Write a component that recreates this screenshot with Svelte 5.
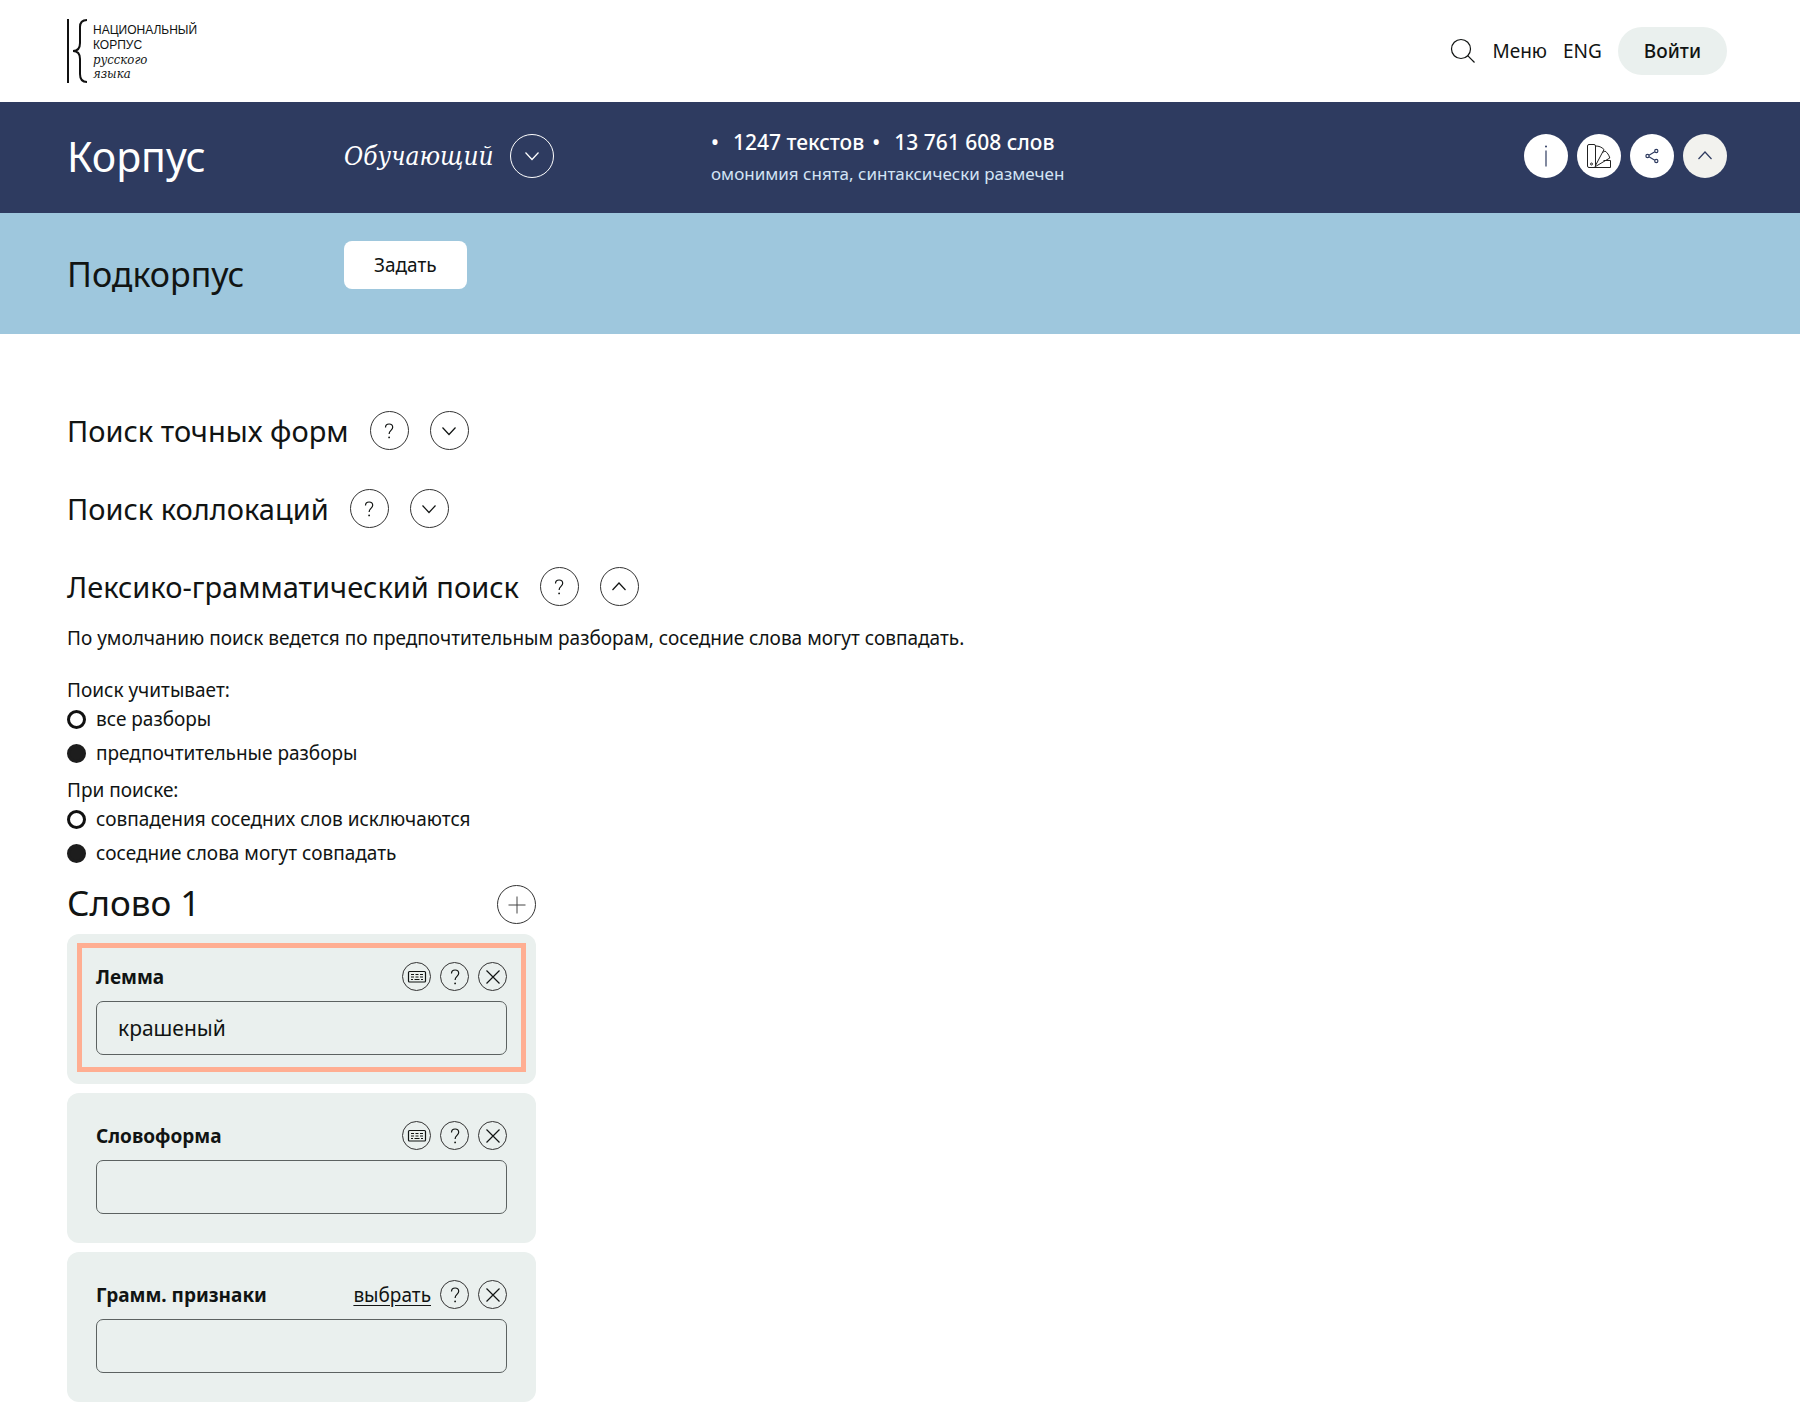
<script>
    let readings = $state('preferred');
    let neighbours = $state('same');
    let openSections = $state({ exact: false, collocations: false, lexgram: true });

    let fields = $state([
        { id: 'lemma', label: 'Лемма', value: 'крашеный', keyboard: true, active: true },
        { id: 'wordform', label: 'Словоформа', value: '', keyboard: true, active: false },
        { id: 'gramm', label: 'Грамм. признаки', value: '', keyboard: false, active: false }
    ]);

    const readingOptions = [
        { value: 'all', label: 'все разборы' },
        { value: 'preferred', label: 'предпочтительные разборы' }
    ];

    const neighbourOptions = [
        { value: 'exclude', label: 'совпадения соседних слов исключаются' },
        { value: 'same', label: 'соседние слова могут совпадать' }
    ];

    const clearField = (field) => {
        field.value = '';
    };
</script>

{#snippet question()}
    <svg class="icon" viewBox="0 0 28 28" width="28" height="28" aria-hidden="true">
        <path d="M10.5 10.5c0-2.2 1.4-3.5 3.6-3.5s3.6 1.3 3.6 3.2c0 3.2-3.6 3.3-3.6 6.8" />
        <circle class="dot" cx="14.1" cy="20.4" r="0.9" />
    </svg>
{/snippet}

{#snippet chevron(up)}
    <svg class="icon" viewBox="0 0 28 28" width="28" height="28" aria-hidden="true">
        {#if up}
            <path d="m7.5 17 6.5-7 6.5 7" />
        {:else}
            <path d="m7.5 10.5 6.5 7 6.5-7" />
        {/if}
    </svg>
{/snippet}

{#snippet section(key, title)}
    <div class="section-row">
        <h2>{title}</h2>
        <button class="circle" aria-label="Справка">{@render question()}</button>
        <button
            class="circle"
            aria-label="Развернуть"
            aria-expanded={openSections[key]}
            onclick={() => (openSections[key] = !openSections[key])}
        >
            {@render chevron(openSections[key])}
        </button>
    </div>
{/snippet}

<header class="top">
    <a class="logo" href="#home">
        <svg viewBox="0 0 22 64" width="22" height="64" aria-hidden="true">
            <path d="M1 0v64" stroke-width="2" />
            <path d="M20 1c-5 0-7 2-7 7v16c0 5-2 8-7 8 5 0 7 3 7 8v15c0 5 2 8 7 8" stroke-width="2" />
        </svg>
        <span class="logo-text">
            <span>НАЦИОНАЛЬНЫЙ</span>
            <span>КОРПУС</span>
            <em>русского</em>
            <em>языка</em>
        </span>
    </a>
    <nav>
        <button aria-label="Поиск">
            <svg class="icon" viewBox="0 0 26 26" width="26" height="26" aria-hidden="true">
                <circle cx="11" cy="11" r="9.5" />
                <path d="m17.7 17.7 6.8 6.8" />
            </svg>
        </button>
        <a href="#menu">Меню</a>
        <a href="#eng">ENG</a>
        <button class="login">Войти</button>
    </nav>
</header>

<section class="band corpus">
    <h1>Корпус</h1>
    <div class="corpus-name">
        <em>Обучающий</em>
        <button class="round outline" aria-label="Выбрать корпус">{@render chevron(false)}</button>
    </div>
    <div class="stats">
        <div class="counts"><span>1247 текстов</span><span>13 761 608 слов</span></div>
        <div class="note">омонимия снята, синтаксически размечен</div>
    </div>
    <div class="tools">
        <button class="round" aria-label="Информация">
            <svg class="icon" viewBox="0 0 28 28" width="28" height="28" aria-hidden="true">
                <path d="M14 8.5v16" />
                <circle class="dot" cx="14" cy="4.6" r="1" />
            </svg>
        </button>
        <button class="round" aria-label="Портрет корпуса">
            <svg class="icon swatch" viewBox="0 0 28 28" width="28" height="28" aria-hidden="true">
                <rect x="2.5" y="2.5" width="8" height="23" rx="1.5" />
                <circle cx="6.5" cy="22" r="1" />
                <path d="M10.500 4c3.500 0 6 1 8.500 3.500L10.500 23.500" />
                <path d="M17.500 10.500l2.500-1.500c2.200 1.500 4 4 4.800 7L10.500 24.500" />
                <path d="m18.500 18.500h7v7H6.500" />
            </svg>
        </button>
        <button class="round" aria-label="Поделиться">
            <svg class="icon" viewBox="0 0 28 28" width="28" height="28" aria-hidden="true">
                <circle cx="9.5" cy="14" r="1.6" />
                <circle cx="18.3" cy="9" r="1.6" />
                <circle cx="18.3" cy="19" r="1.6" />
                <path d="m11 13.2 5.8-3.400M11 14.8l5.8 3.4" />
            </svg>
        </button>
        <button class="round muted" aria-label="Свернуть">{@render chevron(true)}</button>
    </div>
</section>

<section class="band subcorpus">
    <h2>Подкорпус</h2>
    <button class="set">Задать</button>
</section>

<main>
    {@render section('exact', 'Поиск точных форм')}
    {@render section('collocations', 'Поиск коллокаций')}
    {@render section('lexgram', 'Лексико-грамматический поиск')}

    {#if openSections.lexgram}
        <p class="hint">По умолчанию поиск ведется по предпочтительным разборам, соседние слова могут совпадать.</p>

        <fieldset>
            <legend>Поиск учитывает:</legend>
            {#each readingOptions as option}
                <label>
                    <input type="radio" name="readings" value={option.value} bind:group={readings} />
                    {option.label}
                </label>
            {/each}
        </fieldset>
        <fieldset>
            <legend>При поиске:</legend>
            {#each neighbourOptions as option}
                <label>
                    <input type="radio" name="neighbours" value={option.value} bind:group={neighbours} />
                    {option.label}
                </label>
            {/each}
        </fieldset>

        <div class="word">
            <div class="word-header">
                <h3>Слово 1</h3>
                <button class="circle" aria-label="Добавить условие">
                    <svg class="icon plus" viewBox="0 0 28 28" width="28" height="28" aria-hidden="true">
                        <path d="M14 5.5v17M5.5 14h17" />
                    </svg>
                </button>
            </div>
            {#each fields as field (field.id)}
                <div class="card" class:active={field.active}>
                    <div class="card-header">
                        <label for={field.id}>{field.label}</label>
                        {#if field.keyboard}
                            <button class="circle small" aria-label="Клавиатура">
                                <svg class="icon" viewBox="0 0 28 28" width="28" height="28" aria-hidden="true">
                                    <rect x="5.5" y="8.5" width="17" height="10.5" rx="1" />
                                    <path d="M8 11.5h3M12.5 11.5h3M17 11.5h3M8 14h3M12.5 14h3M17 14h3M8 16.5h2M11.5 16.5h5M18 16.5h2" />
                                </svg>
                            </button>
                        {:else}
                            <a href="#select">выбрать</a>
                        {/if}
                        <button class="circle small" aria-label="Справка">{@render question()}</button>
                        <button class="circle small" aria-label="Очистить" onclick={() => clearField(field)}>
                            <svg class="icon" viewBox="0 0 28 28" width="28" height="28" aria-hidden="true">
                                <path d="m7.5 7.500 13 13M20.5 7.500l-13 13" />
                            </svg>
                        </button>
                    </div>
                    <input id={field.id} type="text" bind:value={field.value} />
                </div>
            {/each}
        </div>
    {/if}
</main>

<style>
    :global(body) {
        margin: 0;
        background: #fff;
        color: #111413;
        font-family: "Noto Sans", sans-serif;
        font-size: 19px;
        line-height: 26px;
    }

    h1, h2, h3, p, fieldset, legend {
        margin: 0;
        padding: 0;
        border: none;
        font-weight: 400;
    }

    button {
        display: flex;
        align-items: center;
        justify-content: center;
        box-sizing: border-box;
        padding: 0;
        border: none;
        background: none;
        color: inherit;
        font: inherit;
        cursor: pointer;
    }

    a {
        color: inherit;
        text-decoration: none;
    }

    .icon {
        display: block;
        flex: none;
        fill: none;
        stroke: currentColor;
        stroke-width: 1.2;
    }

    .icon .dot {
        fill: currentColor;
        stroke: none;
    }

    .icon.plus {
        stroke-width: 1;
        color: #444;
    }

    .icon.swatch {
        stroke-width: 1;
        color: #222;
    }

    .top {
        display: flex;
        align-items: center;
        justify-content: space-between;
        box-sizing: border-box;
        height: 102px;
        padding: 0 73px 0 67px;
    }

    .logo {
        display: flex;
        gap: 4px;
    }

    .logo svg {
        fill: none;
        stroke: #111;
    }

    .logo-text {
        display: flex;
        flex-direction: column;
        padding-top: 4px;
        font-family: "Liberation Sans", Arial, sans-serif;
        font-size: 12px;
        line-height: 15px;
    }

    .logo-text em {
        font-family: "DejaVu Serif Condensed", "DejaVu Serif", serif;
        font-size: 13px;
        line-height: 14px;
    }

    nav {
        display: flex;
        align-items: center;
        gap: 16px;
    }

    .login {
        height: 48px;
        padding: 0 26px;
        border-radius: 24px;
        background: #eaf0ee;
        font-weight: 500;
    }

    .band {
        display: grid;
        grid-template-columns: 277px 367px 1fr auto;
        padding: 0 73px 0 67px;
    }

    .corpus {
        box-sizing: border-box;
        align-items: center;
        height: 111px;
        padding-bottom: 3px;
        background: #2e3b60;
        color: #fff;
    }

    .corpus h1 {
        font-size: 41px;
        line-height: 56px;
    }

    .corpus-name {
        display: flex;
        align-items: center;
        gap: 16px;
    }

    .corpus-name em {
        font-family: "DejaVu Serif Condensed", "DejaVu Serif", serif;
        font-size: 26px;
        line-height: 36px;
    }

    .round {
        width: 44px;
        height: 44px;
        border-radius: 50%;
        background: #fff;
        color: #2e3b60;
    }

    .round.outline {
        border: 1px solid #fff;
        background: none;
        color: #fff;
    }

    .round.muted {
        background: #f2f2ee;
    }

    .stats {
        padding-top: 4px;
    }

    .counts {
        display: flex;
        gap: 8px;
        font-size: 21px;
        line-height: 32px;
        font-weight: 500;
    }

    .counts span::before {
        content: "•";
        margin-right: 14px;
    }

    .note {
        color: #d3e4f5;
        font-size: 17px;
        line-height: 32px;
    }

    .tools {
        display: flex;
        gap: 9px;
    }

    .subcorpus {
        align-items: start;
        padding-top: 28px;
        padding-bottom: 35px;
        background: #9ec7dd;
    }

    .subcorpus h2 {
        padding-top: 8px;
        font-size: 34px;
        line-height: 50px;
    }

    .set {
        justify-self: start;
        height: 48px;
        padding: 0 30px;
        border-radius: 8px;
        background: #fff;
    }

    main {
        padding: 77px 73px 6px 67px;
    }

    .section-row {
        display: flex;
        align-items: center;
        gap: 21px;
        margin-bottom: 39px;
    }

    .section-row h2 {
        font-size: 29px;
        line-height: 39px;
    }

    .circle {
        flex: none;
        width: 39px;
        height: 39px;
        border: 1px solid #333;
        border-radius: 50%;
    }

    .circle.small {
        width: 29px;
        height: 29px;
    }

    .hint {
        margin: -20px 0 26px;
    }

    fieldset {
        margin-bottom: 5px;
    }

    legend {
        line-height: 27px;
    }

    fieldset label {
        display: flex;
        align-items: center;
        gap: 10px;
        margin-bottom: 4px;
        line-height: 30px;
    }

    input[type="radio"] {
        appearance: none;
        box-sizing: border-box;
        width: 19px;
        height: 19px;
        margin: 0;
        border: 3px solid #111;
        border-radius: 50%;
    }

    input[type="radio"]:checked {
        border-color: #1d1d1d;
        background: #1d1d1d;
    }

    .word {
        max-width: 469px;
        padding-top: 8px;
    }

    .word-header {
        display: flex;
        align-items: flex-start;
        justify-content: space-between;
        margin-bottom: 10px;
    }

    h3 {
        font-size: 35px;
        line-height: 35px;
    }

    .card {
        position: relative;
        margin-bottom: 9px;
        padding: 28px 29px 29px;
        border-radius: 12px;
        background: #eaf0ee;
    }

    .card:last-child {
        margin-bottom: 0;
    }

    .card.active::after {
        content: "";
        position: absolute;
        inset: 9px 10px 12px;
        border: 5px solid #ffae92;
        pointer-events: none;
    }

    .card-header {
        display: flex;
        align-items: center;
        gap: 9px;
        margin-bottom: 10px;
    }

    .card-header label {
        flex: 1;
        font-weight: 700;
    }

    .card-header a {
        text-decoration: underline;
        text-underline-offset: 3px;
    }

    input[type="text"] {
        display: block;
        box-sizing: border-box;
        width: 100%;
        height: 54px;
        padding: 0 21px;
        border: 1px solid #5c6261;
        border-radius: 7px;
        background: transparent;
        color: inherit;
        font: inherit;
        font-size: 21px;
    }
</style>
